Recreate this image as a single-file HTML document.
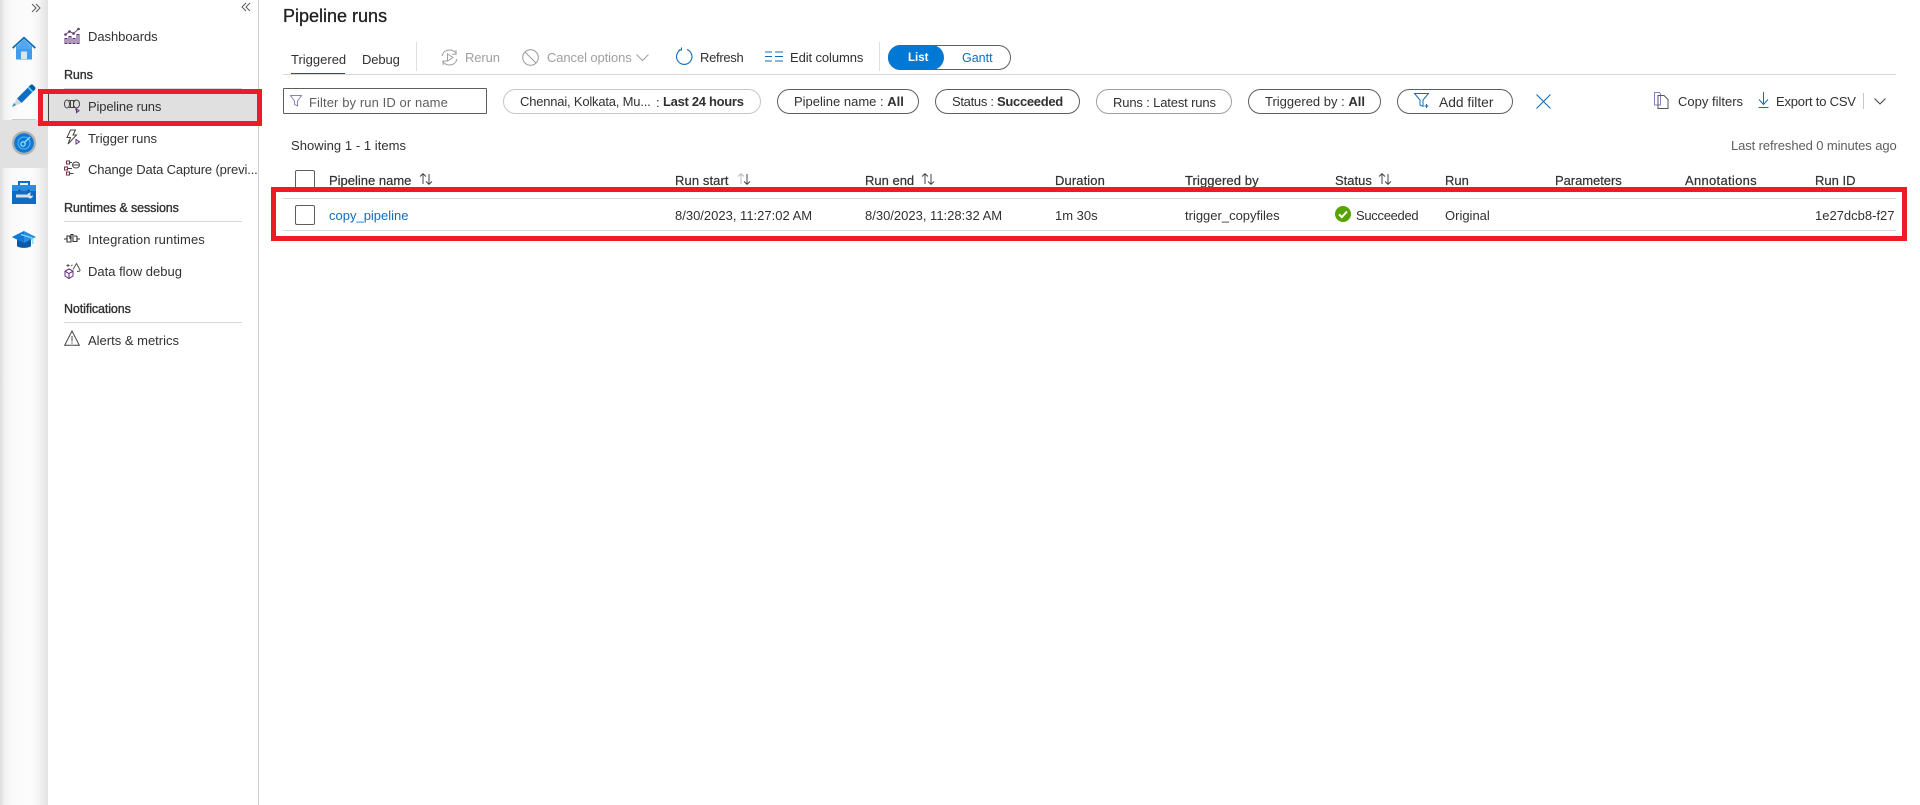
<!DOCTYPE html>
<html lang="en"><head><meta charset="utf-8"><title>Pipeline runs</title>
<style>
html,body{margin:0;padding:0;background:#fff;width:1920px;height:805px;overflow:hidden}
body{position:relative;font-family:"Liberation Sans",Arial,sans-serif;font-size:13px;color:#323130}
.t{position:absolute;white-space:nowrap;line-height:16px;height:16px}
.a{position:absolute}
.s{font-size:12.5px;color:#323130;-webkit-text-stroke:.35px #323130;letter-spacing:-.1px}
.hd{font-size:13px;color:#323130;-webkit-text-stroke:.2px #323130}
.pill{position:absolute;box-sizing:border-box;height:25px;top:89px;border:1px solid #605e5c;border-radius:13px;background:#fff}
.g{color:#a19f9d}
svg{position:absolute;overflow:visible}
b{font-weight:bold}
</style></head><body>

<!-- left rail -->
<div class="a" style="left:0;top:0;width:48px;height:805px;background:linear-gradient(90deg,#dcdcdc 0,#f2f2f2 5px,#fafafa 12px,#fcfcfc 30px,#f6f6f6 38px,#e2e2e2 48px)"></div>
<div class="a" style="left:0;top:120px;width:48px;height:48px;background:#e1e1e1"></div>
<div class="a" style="left:12px;top:119px;width:24px;height:1px;background:#ccc"></div>
<svg style="left:31px;top:3px" width="10" height="10" viewBox="0 0 10 10" fill="none" stroke="#605e5c" stroke-width="1"><path d="M1 1l4 4-4 4M5 1l4 4-4 4"/></svg>

<!-- home -->
<svg style="left:12px;top:36px" width="24" height="24" viewBox="0 0 24 24"><path d="M4 10h16v13.500H4z" fill="#3f9bec"/><path d="M12 .5L0 11.500l1.300 1.200L12 3l10.700 9.700L24 11.500z" fill="#0f6cbd"/><path d="M4 11L12 3.200 20 11v2H4z" fill="#50a8f0"/><path d="M9 15.500h6V23H9z" fill="#d8e6f2"/></svg>
<!-- pencil -->
<svg style="left:12px;top:83px" width="24" height="24" viewBox="0 0 24 24"><path d="M5 15.500L18 2.500l4.500 4.500L9.500 20z" fill="#0f6cc4"/><path d="M16.500 4L18.500 2c.8-.8 1.800-.8 2.500 0l2 2c.7.7.7 1.700 0 2.500l-2 2z" fill="#0a5aa8"/><path d="M15.500 4.800l1.200-1.200 4.700 4.700-1.200 1.200z" fill="#5fd0f0"/><path d="M5 15.500l4.500 4.500L0 24z" fill="#cfd8de"/><path d="M2 20l2 2-4 2z" fill="#2b88d8"/></svg>
<!-- monitor -->
<svg style="left:12px;top:131px" width="24" height="24" viewBox="0 0 24 24"><circle cx="12" cy="12" r="12" fill="#b0b0b0"/><circle cx="12" cy="12" r="9.800" fill="#0f78d4"/><circle cx="12" cy="12" r="6" fill="none" stroke="#50b8ee" stroke-width="1.100"/><circle cx="11" cy="13" r="2.200" fill="none" stroke="#8fdcf8" stroke-width="1.300"/><path d="M12 12l6-6" stroke="#8fdcf8" stroke-width="1.400"/></svg>
<!-- toolbox -->
<svg style="left:12px;top:180px" width="24" height="24" viewBox="0 0 24 24"><path d="M6 6V1h12v5h-2V3H8v3z" fill="#0f6cc4"/><path d="M0 5h24v19H0z" fill="#0f6cc4"/><path d="M0 5h24v6H0z" fill="#2c8ce0"/><path d="M6.500 9.500h2v3h-2zM15.500 9.500h2v3h-2z" fill="#0a5aa8"/><path d="M4 14.500h12v3H4z" fill="#d8dfe5"/><path d="M15.500 14.500c.5-1.500 2-2 3.500-2l-1 2 1 1.500 2-.5c0 2-2 3.500-4 2.800-.7-.3-1.300-1.500-1.500-3.800z" fill="#d8dfe5"/></svg>
<!-- cap -->
<svg style="left:12px;top:231px" width="24" height="18" viewBox="0 0 24 18"><path d="M5 8v7c2 2.500 12 2.500 14 0V8z" fill="#0a5aa8"/><path d="M12 0L0 6l12 6 12-6z" fill="#2c8ce0"/><path d="M12 0L0 6l12 6z" fill="#0f7ad4"/><path d="M9 3.500l11 3.500 1 6" fill="none" stroke="#7fdcf4" stroke-width="1.400"/></svg>

<!-- sidebar -->
<div class="a" style="left:258px;top:0;width:1px;height:805px;background:#cfcfcf"></div>
<svg style="left:241px;top:2px" width="10" height="10" viewBox="0 0 10 10" fill="none" stroke="#605e5c" stroke-width="1"><path d="M5 1L1 5l4 4M9 1L5 5l4 4"/></svg>

<div class="a" style="left:48px;top:94px;width:210px;height:27px;background:#e0e0e0"></div>
<div class="a" style="left:48px;top:94px;width:1px;height:27px;background:#444"></div>

<svg style="left:64px;top:28px" width="16" height="16" viewBox="0 0 16 16" fill="none" stroke="#5c2d79" stroke-width="1"><path d="M1 10.500h2v5H1zM5 8.500h2v7H5zM9 10.500h2v5H9zM13 6.500h2v9h-2z"/><path d="M1.500 6.500L5.500 3.500 9.500 5.500 14.500 1" stroke="#605e5c"/><circle cx="1.500" cy="6.500" r=".8"/><circle cx="5.500" cy="3.500" r=".8"/><circle cx="9.500" cy="5.500" r=".8"/><circle cx="14.500" cy="1" r=".8"/></svg>
<div class="t" style="left:88px;top:29px;letter-spacing:-.05px">Dashboards</div>

<div class="t s" style="left:64px;top:67px">Runs</div>
<div class="a" style="left:64px;top:88px;width:178px;height:1px;background:#d8d8d8"></div>

<svg style="left:64px;top:98px" width="16" height="16" viewBox="0 0 16 16" fill="none" stroke="#444" stroke-width="1"><ellipse cx="3" cy="6" rx="2.500" ry="4"/><path d="M5 2.500h6M5 9.500h6M6.500 2.500v7M9.500 2.500v7"/><ellipse cx="12.500" cy="6" rx="3" ry="4"/><path d="M12 10v2.500" stroke="#5c2d79"/><path d="M12.500 11l2.500 1.700-2.500 1.800z" stroke="#5c2d79"/></svg>
<div class="t" style="left:88px;top:99px;letter-spacing:-.15px">Pipeline runs</div>

<svg style="left:65px;top:129px" width="16" height="16" viewBox="0 0 16 16" fill="none" stroke="#444" stroke-width="1"><path d="M5.500 1h5L8 6h3.500L3 15l2.500-6.500H2z"/><path d="M11 10.500l3.500 2.300-3.500 2.200z" stroke="#5c2d79"/></svg>
<div class="t" style="left:88px;top:131px;letter-spacing:-.05px">Trigger runs</div>

<svg style="left:64px;top:160px" width="16" height="16" viewBox="0 0 16 16" fill="none" stroke="#444" stroke-width="1"><path d="M2.500 1h3v3h-3zM.5 7h3v3h-3zM2.500 12h3v3h-3z" stroke="#7a2d3c"/><ellipse cx="12" cy="5" rx="3.500" ry="3"/><path d="M5 2.500h3M4 8.500h4M8.500 5h7M5.500 13.500h4"/></svg>
<div class="t" style="left:88px;top:162px;letter-spacing:-.13px">Change Data Capture (previ...</div>

<div class="t s" style="left:64px;top:200px">Runtimes &amp; sessions</div>
<div class="a" style="left:64px;top:221px;width:178px;height:1px;background:#d8d8d8"></div>

<svg style="left:64px;top:232px" width="16" height="14" viewBox="0 0 16 14" fill="none" stroke="#333" stroke-width="1.100"><path d="M0 7h3V10h4V2.500h2v7h4V4M13 7h3M3 7V4h3v3M10 4h3"/></svg>
<div class="t" style="left:88px;top:232px;letter-spacing:.1px">Integration runtimes</div>

<svg style="left:64px;top:262px" width="17" height="17" viewBox="0 0 17 17" fill="none" stroke="#555" stroke-width="1"><path d="M5 7l4 2.200v4.800l-4 2.500-4-2.500V9.200z" stroke="#5c2d79"/><path d="M1 9.200l4 2.300 4-2.300M5 11.500V16" stroke="#5c2d79"/><path d="M9 7.500L12.500 1.500 16 8c.3 1-1 1.500-3 1.500"/><path d="M4 2v3M2.500 3.500h3M7 4l1.500-1"/></svg>
<div class="t" style="left:88px;top:264px">Data flow debug</div>

<div class="t s" style="left:64px;top:301px">Notifications</div>
<div class="a" style="left:64px;top:322px;width:178px;height:1px;background:#d8d8d8"></div>

<svg style="left:64px;top:330px" width="16" height="16" viewBox="0 0 16 16" fill="none" stroke="#444" stroke-width="1"><path d="M8 1L.7 15.300h14.600z"/><path d="M8 6v5.500M8 12.500v1.300"/></svg>
<div class="t" style="left:88px;top:333px">Alerts &amp; metrics</div>

<!-- main -->
<div class="t" style="left:283px;top:5px;font-size:18px;line-height:22px;height:22px;color:#201f1e;-webkit-text-stroke:.3px #201f1e">Pipeline runs</div>

<div class="t" style="left:291px;top:52px">Triggered</div>
<div class="t" style="left:362px;top:52px;letter-spacing:-.1px">Debug</div>
<div class="a" style="left:291px;top:73px;width:54px;height:2px;background:#005ba1"></div>
<div class="a" style="left:283px;top:74px;width:1613px;height:1px;background:#d6d6d6"></div>
<div class="a" style="left:416px;top:42px;width:1px;height:29px;background:#e1dfdd"></div>

<svg style="left:441px;top:49px" width="17" height="17" viewBox="0 0 17 17" fill="none" stroke="#a19f9d" stroke-width="1"><path d="M1 7C2 3 5 1 8.500 1c3 0 5.500 1.500 7 4M15 1v4.200h-4M16 10c-1 4-4 6-7.500 6-3 0-5.500-1.500-7-4M2 16v-4h4"/><path d="M6.500 5l5.500 3.500L6.500 12z"/></svg>
<div class="t g" style="left:465px;top:50px;letter-spacing:-.1px">Rerun</div>
<svg style="left:522px;top:49px" width="17" height="17" viewBox="0 0 17 17" fill="none" stroke="#a19f9d" stroke-width="1.100"><circle cx="8.500" cy="8.500" r="7.800"/><path d="M3 3l11 11"/></svg>
<div class="t g" style="left:547px;top:50px;letter-spacing:-.1px">Cancel options</div>
<svg style="left:636px;top:54px" width="13" height="7" viewBox="0 0 13 7" fill="none" stroke="#a19f9d"><path d="M.5.500l6 6 6-6"/></svg>
<svg style="left:676px;top:47px" width="17" height="18" viewBox="0 0 17 18" fill="none" stroke="#0f6cbd" stroke-width="1.100"><path d="M11 2.500a7.700 7.700 0 1 1-5.500 0M5.500 .5v2.500h-3"/></svg>
<div class="t" style="left:700px;top:50px;letter-spacing:-.3px">Refresh</div>
<svg style="left:765px;top:51px" width="18" height="11" viewBox="0 0 18 11" fill="none" stroke="#0f6cbd" stroke-width="1.100"><path d="M0 1h7M0 5.500h7M0 10h7M10 1h8M10 5.500h8M10 10h8"/></svg>
<div class="t" style="left:790px;top:50px;letter-spacing:-.1px">Edit columns</div>
<div class="a" style="left:879px;top:42px;width:1px;height:29px;background:#e1dfdd"></div>

<div class="a" style="left:888px;top:45px;width:123px;height:25px;box-sizing:border-box;border:1px solid #605e5c;border-radius:13px;background:#fff"></div>
<div class="a" style="left:888px;top:45px;width:56px;height:25px;border-radius:13px;background:#0078d4"></div>
<div class="t" style="left:908px;top:50px;font-size:11.500px;color:#fff;font-weight:bold">List</div>
<div class="t" style="left:962px;top:50px;font-size:12.500px;color:#0f6cbd">Gantt</div>

<div class="a" style="left:283px;top:88px;width:204px;height:26px;box-sizing:border-box;border:1px solid #605e5c;border-radius:1px"></div>
<svg style="left:290px;top:95px" width="12" height="12" viewBox="0 0 12 12" fill="none" stroke="#8a7fc0"><path d="M.5.500h11L7.500 6v5l-3-1.500V6z"/></svg>
<div class="t" style="left:309px;top:95px;color:#605e5c;letter-spacing:.1px">Filter by run ID or name</div>

<div class="pill" style="left:503px;width:258px;border-color:#c8c6c4"></div>
<div class="t" style="left:520px;top:94px;letter-spacing:-.2px">Chennai, Kolkata, Mu...</div>
<div class="t" style="left:656px;top:95px">:</div>
<div class="t" style="left:663px;top:94px;letter-spacing:-.3px"><b>Last 24 hours</b></div>

<div class="pill" style="left:777px;width:142px"></div>
<div class="t" style="left:794px;top:94px">Pipeline name : <b>All</b></div>
<div class="pill" style="left:935px;width:145px"></div>
<div class="t" style="left:952px;top:94px;letter-spacing:-.3px">Status : <b>Succeeded</b></div>
<div class="pill" style="left:1096px;width:136px;border-color:#a19f9d"></div>
<div class="t" style="left:1113px;top:95px;letter-spacing:-.15px">Runs : Latest runs</div>
<div class="pill" style="left:1248px;width:133px"></div>
<div class="t" style="left:1265px;top:94px">Triggered by : <b>All</b></div>
<div class="pill" style="left:1397px;width:116px"></div>
<svg style="left:1414px;top:93px" width="16" height="15" viewBox="0 0 16 15" fill="none" stroke="#0f6cbd"><path d="M.5.500h14L9 7v6.500L6 12V7z"/><path d="M12.500 11v4M10.500 13h4"/></svg>
<div class="t" style="left:1439px;top:95px;font-size:13.800px">Add filter</div>
<svg style="left:1536px;top:94px" width="15" height="15" viewBox="0 0 15 15" fill="none" stroke="#0f6cbd" stroke-width="1.100"><path d="M.5.500l14 14M14.500.500l-14 14"/></svg>

<svg style="left:1654px;top:92px" width="15" height="17" viewBox="0 0 15 17" fill="none" stroke="#8a7fc0"><path d="M.5.500h5l1 1.500v11H.5z"/><path d="M4 3.500h6l4 4v9H4z" stroke="#555"/></svg>
<div class="t" style="left:1678px;top:94px">Copy filters</div>
<svg style="left:1758px;top:92px" width="11" height="16" viewBox="0 0 11 16" fill="none" stroke="#0f6cbd"><path d="M5.500 0v12M1 7.500l4.500 5 4.500-5M.5 15.500h10"/></svg>
<div class="t" style="left:1776px;top:94px;letter-spacing:-.2px">Export to CSV</div>
<div class="a" style="left:1863px;top:93px;width:1px;height:16px;background:#c8c6c4"></div>
<svg style="left:1874px;top:98px" width="12" height="7" viewBox="0 0 12 7" fill="none" stroke="#444"><path d="M.5.500l5.500 5.500 5.500-5.500"/></svg>

<div class="t" style="left:291px;top:138px;letter-spacing:.05px">Showing 1 - 1 items</div>
<div class="t" style="left:1731px;top:138px;color:#605e5c;letter-spacing:-.1px">Last refreshed 0 minutes ago</div>

<!-- table head -->
<div class="a" style="left:295px;top:170px;width:20px;height:19px;box-sizing:border-box;border:1px solid #605e5c;border-radius:2px"></div>
<div class="t hd" style="left:329px;top:173px">Pipeline name</div>
<svg style="left:419px;top:173px" width="14" height="12" viewBox="0 0 14 12" fill="none" stroke="#444"><path d="M4 11V1M1 3.500L4 .7l3 2.800M10 1v10M7 8.500l3 2.800 3-2.800"/></svg>
<div class="t hd" style="left:675px;top:173px;letter-spacing:.1px">Run start</div>
<svg style="left:737px;top:173px" width="14" height="12" viewBox="0 0 14 12" fill="none" stroke="#444"><path d="M4 11V1M1 3.500L4 .7l3 2.800" stroke="#bbb"/><path d="M10 1v10M7 8.500l3 2.800 3-2.800"/></svg>
<div class="t hd" style="left:865px;top:173px">Run end</div>
<svg style="left:921px;top:173px" width="14" height="12" viewBox="0 0 14 12" fill="none" stroke="#444"><path d="M4 11V1M1 3.500L4 .7l3 2.800M10 1v10M7 8.500l3 2.800 3-2.800"/></svg>
<div class="t hd" style="left:1055px;top:173px;letter-spacing:.1px">Duration</div>
<div class="t hd" style="left:1185px;top:173px;letter-spacing:.1px">Triggered by</div>
<div class="t hd" style="left:1335px;top:173px">Status</div>
<svg style="left:1378px;top:173px" width="14" height="12" viewBox="0 0 14 12" fill="none" stroke="#444"><path d="M4 11V1M1 3.500L4 .7l3 2.800M10 1v10M7 8.500l3 2.800 3-2.800"/></svg>
<div class="t hd" style="left:1445px;top:173px">Run</div>
<div class="t hd" style="left:1555px;top:173px;letter-spacing:-.05px">Parameters</div>
<div class="t hd" style="left:1685px;top:173px;letter-spacing:.3px">Annotations</div>
<div class="t hd" style="left:1815px;top:173px">Run ID</div>

<!-- row -->
<div class="a" style="left:283px;top:198px;width:1613px;height:1px;background:#d8d8d8"></div>
<div class="a" style="left:283px;top:230px;width:1613px;height:1px;background:#d8d8d8"></div>
<div class="a" style="left:295px;top:205px;width:20px;height:20px;box-sizing:border-box;border:1px solid #605e5c;border-radius:2px"></div>
<div class="t" style="left:329px;top:208px;color:#0f6cbd">copy_pipeline</div>
<div class="t" style="left:675px;top:208px">8/30/2023, 11:27:02 AM</div>
<div class="t" style="left:865px;top:208px">8/30/2023, 11:28:32 AM</div>
<div class="t" style="left:1055px;top:208px">1m 30s</div>
<div class="t" style="left:1185px;top:208px">trigger_copyfiles</div>
<svg style="left:1335px;top:206px" width="16" height="16" viewBox="0 0 16 16"><circle cx="8" cy="8" r="8" fill="#57a300"/><path d="M4 8.300l2.800 2.800L12 5.500" fill="none" stroke="#fff" stroke-width="2"/></svg>
<div class="t" style="left:1356px;top:208px;letter-spacing:-.3px">Succeeded</div>
<div class="t" style="left:1445px;top:208px">Original</div>
<div class="t" style="left:1815px;top:208px;width:80px;overflow:hidden">1e27dcb8-f277</div>

<!-- red annotations -->
<div class="a" style="left:38px;top:89px;width:224px;height:37px;box-sizing:border-box;border:5px solid #ed1c24"></div>
<div class="a" style="left:271px;top:187px;width:1636px;height:54px;box-sizing:border-box;border:5px solid #ed1c24"></div>
</body></html>
